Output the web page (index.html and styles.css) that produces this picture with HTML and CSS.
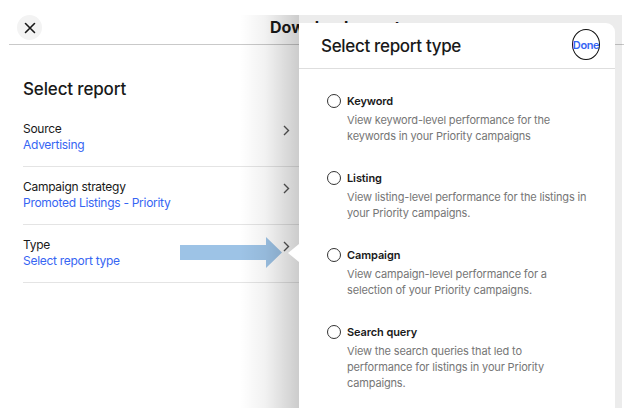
FILE: index.html
```html
<!DOCTYPE html>
<html lang="en">
<head>
<meta charset="utf-8">
<title>Download report</title>
<link rel="stylesheet" href="styles.css">
</head>
<body>
<div class="page">
  <header class="topbar">
    <button class="close" aria-label="Close">
      <svg width="12" height="12" viewBox="0 0 12 12"><path d="M1.5 1.5 L10.5 10.5 M10.5 1.5 L1.5 10.5" stroke="#191919" stroke-width="1.6" stroke-linecap="round"/></svg>
    </button>
    <h1 class="title">Download report</h1>
  </header>
  <main class="content">
    <h2 class="heading">Select report</h2>
    <div class="row">
      <div class="row-text"><div class="row-label">Source</div><div class="row-value">Advertising</div></div>
      <svg class="chev" width="7" height="11" viewBox="0 0 7 11"><path d="M1 1 L5.5 5.5 L1 10" fill="none" stroke="#555" stroke-width="1.4"/></svg>
    </div>
    <div class="row">
      <div class="row-text"><div class="row-label">Campaign strategy</div><div class="row-value">Promoted Listings - Priority</div></div>
      <svg class="chev" width="7" height="11" viewBox="0 0 7 11"><path d="M1 1 L5.5 5.5 L1 10" fill="none" stroke="#555" stroke-width="1.4"/></svg>
    </div>
    <div class="row">
      <div class="row-text"><div class="row-label">Type</div><div class="row-value">Select report type</div></div>
      <svg class="chev" width="7" height="11" viewBox="0 0 7 11"><path d="M1 1 L5.5 5.5 L1 10" fill="none" stroke="#555" stroke-width="1.4"/></svg>
    </div>
  </main>

  <svg class="arrow" width="104" height="34" viewBox="0 0 104 34"><polygon points="0,8 86,8 86,0 102,15.5 86,31 86,23 0,23" fill="#9dc3e6"/></svg>

  <div class="scrim">
    <section class="sheet">
      <div class="sheet-head">
        <h2 class="sheet-title">Select report type</h2>
        <span class="done">Done</span>
      </div>
      <div class="options">
        <div class="option">
          <span class="radio"></span>
          <div class="opt-label">Keyword</div>
          <div class="opt-desc">View keyword-level performance for the<br>keywords in your Priority campaigns</div>
        </div>
        <div class="option">
          <span class="radio"></span>
          <div class="opt-label">Listing</div>
          <div class="opt-desc">View listing-level performance for the listings in<br>your Priority campaigns.</div>
        </div>
        <div class="option">
          <span class="radio"></span>
          <div class="opt-label">Campaign</div>
          <div class="opt-desc">View campaign-level performance for a<br>selection of your Priority campaigns.</div>
        </div>
        <div class="option">
          <span class="radio"></span>
          <div class="opt-label">Search query</div>
          <div class="opt-desc">View the search queries that led to<br>performance for listings in your Priority<br>campaigns.</div>
        </div>
      </div>
    </section>
  </div>
</div>
</body>
</html>
```

FILE: styles.css
```css
* { box-sizing: border-box; }
html, body { margin: 0; padding: 0; background: #fff; }
body { font-family: Inter, "Open Sans", "Liberation Sans", sans-serif; color: #191919; }
.page { position: relative; width: 624px; height: 413px; overflow: hidden; }

.topbar {
  display: flex;
  align-items: center;
  margin-left: 9px;
  padding-top: 15px;
  padding-bottom: 4px;
  border-bottom: 1px solid #c9c9c9;
}
.close {
  width: 25px; height: 25px;
  margin-left: 8px;
  border: 0; border-radius: 50%;
  background: #f3f3f3;
  display: flex; align-items: center; justify-content: center;
  padding: 0;
}
.title {
  margin: 0 0 0 228px;
  font-size: 16px;
  font-weight: 700;
  line-height: 25px;
  white-space: nowrap;
}

.content { width: 299px; padding-left: 23px; }
.heading {
  margin: 32px 0 8px;
  font-size: 17px;
  font-weight: 500;
  line-height: 24px;
  letter-spacing: -0.15px;
}
.row {
  display: flex;
  justify-content: space-between;
  align-items: flex-start;
  padding: 12px 9px 13px 0;
  border-bottom: 1px solid #e4e4e4;
}
.row-label, .row-value { font-size: 12px; line-height: 16px; letter-spacing: -0.28px; }
.row-value { color: #3665f3; }
.chev { margin-top: 4px; }

.arrow { position: absolute; left: 180px; top: 237px; }

.scrim {
  position: absolute;
  left: 240px; top: 15px;
  width: 382px; height: 393px;
  background: linear-gradient(90deg, rgba(0,0,0,0) 0px, rgba(0,0,0,0.05) 25px, rgba(0,0,0,0.2) 59px, rgba(0,0,0,0.075) 59px);
}
.sheet {
  position: absolute;
  left: 59px; top: 8px; bottom: 0;
  width: 316px;
  background: #fff;
  border-top-right-radius: 9px;
}
.sheet::before {
  content: "";
  position: absolute;
  left: -11px; top: 221px;
  border-style: solid;
  border-width: 9px 11px 9px 0;
  border-color: transparent #fff transparent transparent;
}
.sheet-head {
  height: 46px;
  display: flex;
  align-items: center;
  justify-content: space-between;
  padding: 0 15px 0 22px;
  border-bottom: 1px solid #dedede;
}
.sheet-title { margin: 0; font-size: 17px; font-weight: 500; letter-spacing: -0.33px; }
.done {
  width: 28px; height: 31px;
  margin-bottom: 2px;
  display: flex; align-items: center; justify-content: center;
  border: 1.5px solid #111;
  border-radius: 50%;
  color: #3665f3;
  font-size: 11px;
  font-weight: 600;
  letter-spacing: -0.4px;
  white-space: nowrap;
  overflow: visible;
}
.options { padding: 24px 0 0 28px; }
.option {
  display: grid;
  grid-template-columns: 14px 1fr;
  column-gap: 6px;
  margin-bottom: 26px;
}
.radio {
  width: 14px; height: 14px;
  margin-top: 1px;
  border: 1.3px solid #333;
  border-radius: 50%;
}
.opt-label { font-size: 11px; font-weight: 600; line-height: 16px; letter-spacing: -0.1px; }
.opt-desc {
  grid-column: 2;
  margin-top: 3px;
  font-size: 11px;
  line-height: 16px;
  color: #767676;
  letter-spacing: -0.16px;
}
```
